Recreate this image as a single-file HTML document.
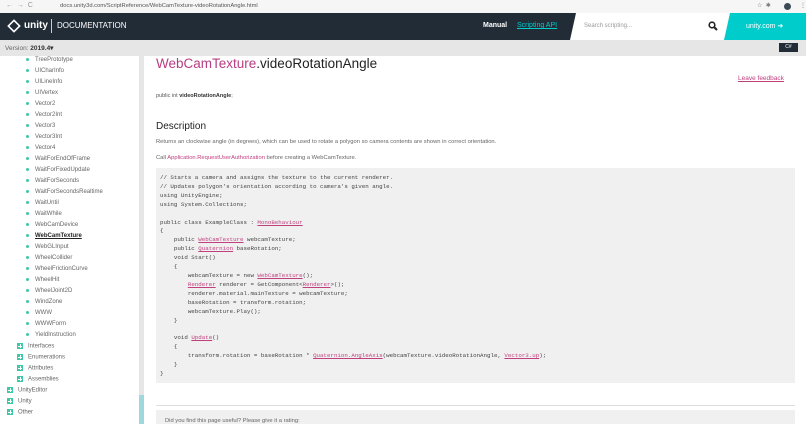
<!DOCTYPE html>
<html><head><style>
*{margin:0;padding:0;box-sizing:border-box}
body{width:806px;height:424px;overflow:hidden;font-family:"Liberation Sans",sans-serif;background:#fff;position:relative;color:#333}
.abs{position:absolute}
.side div{position:absolute;font-size:6px;color:#666;white-space:nowrap}
.dot{display:inline-block;width:3px;height:3px;border-radius:50%;background:#3dc9a8;margin-right:6px;vertical-align:middle}
.plus{display:inline-block;width:6px;height:6px;background:#3dc9a8;margin-right:5px;vertical-align:middle;position:relative}
.plus:after{content:"";position:absolute;left:1px;top:2.5px;width:4px;height:1px;background:#fff}
.plus:before{content:"";position:absolute;left:2.5px;top:1px;width:1px;height:4px;background:#fff}
pre{font-family:"Liberation Mono",monospace;font-size:5.8px;line-height:8.9px;color:#444}
pre u{color:#c0407f}
a{color:#c0407f}
</style></head><body>
<div class="abs" style="left:0;top:0;width:806px;height:13px;background:#f6f6f6"></div>
<div class="abs" style="left:6px;top:2px;font-size:7px;color:#999">←&nbsp;&nbsp;→&nbsp;&nbsp;C</div>
<div class="abs" style="left:60px;top:3px;font-size:5.8px;color:#555">docs.unity3d.com/ScriptReference/WebCamTexture-videoRotationAngle.html</div>
<div class="abs" style="left:757px;top:2px;font-size:6px;color:#777">☆&nbsp;&nbsp;✱</div>
<div class="abs" style="left:784px;top:3px;width:7px;height:7px;border-radius:50%;background:#3c4a55"></div>
<div class="abs" style="left:800px;top:2px;font-size:6px;color:#777">⋮</div>
<div class="abs" style="left:0;top:13px;width:806px;height:27px;background:#222c37"></div>
<div class="abs" style="left:8px;top:20px;width:12px;height:12px;border:2px solid #fff;transform:rotate(45deg) scale(.8)"></div>
<div class="abs" style="left:24px;top:20px;font-size:10px;font-weight:bold;color:#fff">unity</div>
<div class="abs" style="left:51px;top:19px;width:1px;height:14px;background:#ccc"></div>
<div class="abs" style="left:57px;top:21px;font-size:8px;color:#fff">DOCUMENTATION</div>
<div class="abs" style="left:483px;top:22px;font-size:7px;color:#fff;font-weight:bold">Manual</div>
<div class="abs" style="left:517px;top:22px;font-size:7px;color:#00cccc;text-decoration:underline">Scripting API</div>
<div class="abs" style="left:570px;top:13px;width:160px;height:27px;background:#fff;clip-path:polygon(6px 0,100% 0,100% 100%,0 100%)"></div>
<div class="abs" style="left:584px;top:23px;font-size:6px;color:#999">Search scripting...</div>
<svg class="abs" style="left:708px;top:21px" width="10" height="10" viewBox="0 0 10 10"><circle cx="4" cy="4" r="2.8" fill="none" stroke="#222" stroke-width="1.6"/><path d="M6 6 L9 9" stroke="#222" stroke-width="2"/></svg>
<div class="abs" style="left:724px;top:13px;width:82px;height:27px;background:#00cccc;clip-path:polygon(6px 0,100% 0,100% 100%,0 100%)"></div>
<div class="abs" style="left:746px;top:22px;font-size:7px;color:#fff">unity.com ➜</div>
<div class="abs" style="left:0;top:40px;width:806px;height:16px;background:#e6e6e6"></div>
<div class="abs" style="left:5px;top:44px;font-size:6.5px;color:#666">Version: <b style="color:#333">2019.4▾</b></div>
<div class="abs" style="left:779px;top:43px;width:19px;height:9px;background:#222c37;color:#fff;font-size:5px;text-align:center;line-height:9px">C#</div>
<div class="abs" style="left:139px;top:56px;width:5px;height:368px;background:#e6e6e6"></div>
<div class="abs" style="left:139px;top:395px;width:5px;height:29px;background:#9fd8dc"></div>
<div class="side">
<div style="left:26px;top:57px"><span class="dot"></span>TreePrototype</div>
<div style="left:26px;top:68px"><span class="dot"></span>UICharInfo</div>
<div style="left:26px;top:79px"><span class="dot"></span>UILineInfo</div>
<div style="left:26px;top:90px"><span class="dot"></span>UIVertex</div>
<div style="left:26px;top:101px"><span class="dot"></span>Vector2</div>
<div style="left:26px;top:112px"><span class="dot"></span>Vector2Int</div>
<div style="left:26px;top:123px"><span class="dot"></span>Vector3</div>
<div style="left:26px;top:134px"><span class="dot"></span>Vector3Int</div>
<div style="left:26px;top:145px"><span class="dot"></span>Vector4</div>
<div style="left:26px;top:156px"><span class="dot"></span>WaitForEndOfFrame</div>
<div style="left:26px;top:167px"><span class="dot"></span>WaitForFixedUpdate</div>
<div style="left:26px;top:178px"><span class="dot"></span>WaitForSeconds</div>
<div style="left:26px;top:189px"><span class="dot"></span>WaitForSecondsRealtime</div>
<div style="left:26px;top:200px"><span class="dot"></span>WaitUntil</div>
<div style="left:26px;top:211px"><span class="dot"></span>WaitWhile</div>
<div style="left:26px;top:222px"><span class="dot"></span>WebCamDevice</div>
<div style="left:26px;top:233px;color:#222;font-weight:bold;text-decoration:underline"><span class="dot"></span>WebCamTexture</div>
<div style="left:26px;top:244px"><span class="dot"></span>WebGLInput</div>
<div style="left:26px;top:255px"><span class="dot"></span>WheelCollider</div>
<div style="left:26px;top:266px"><span class="dot"></span>WheelFrictionCurve</div>
<div style="left:26px;top:277px"><span class="dot"></span>WheelHit</div>
<div style="left:26px;top:288px"><span class="dot"></span>WheelJoint2D</div>
<div style="left:26px;top:299px"><span class="dot"></span>WindZone</div>
<div style="left:26px;top:310px"><span class="dot"></span>WWW</div>
<div style="left:26px;top:321px"><span class="dot"></span>WWWForm</div>
<div style="left:26px;top:332px"><span class="dot"></span>YieldInstruction</div>
<div style="left:17px;top:343px"><span class="plus"></span>Interfaces</div>
<div style="left:17px;top:354px"><span class="plus"></span>Enumerations</div>
<div style="left:17px;top:365px"><span class="plus"></span>Attributes</div>
<div style="left:17px;top:376px"><span class="plus"></span>Assemblies</div>
<div style="left:7px;top:387px"><span class="plus"></span>UnityEditor</div>
<div style="left:7px;top:398px"><span class="plus"></span>Unity</div>
<div style="left:7px;top:409px"><span class="plus"></span>Other</div>
</div>
<div class="abs" style="left:156px;top:56px;font-size:13.5px;color:#222"><span style="color:#b83c82">WebCamTexture</span>.videoRotationAngle</div>
<div class="abs" style="left:738px;top:75px;font-size:6.5px;color:#c0407f;text-decoration:underline">Leave feedback</div>
<div class="abs" style="left:156px;top:93px;font-size:5.5px;color:#555">public int <b style="color:#333">videoRotationAngle</b>;</div>
<div class="abs" style="left:156px;top:121px;font-size:10px;color:#222">Description</div>
<div class="abs" style="left:156px;top:139px;font-size:5.8px;color:#666">Returns an clockwise angle (in degrees), which can be used to rotate a polygon so camera contents are shown in correct orientation.</div>
<div class="abs" style="left:156px;top:155px;font-size:5.8px;color:#666">Call <a>Application.RequestUserAuthorization</a> before creating a WebCamTexture.</div>
<div class="abs" style="left:156px;top:168px;width:639px;height:215px;background:#f0f0f0"></div>
<pre class="abs" style="left:160px;top:174px">// Starts a camera and assigns the texture to the current renderer.
// Updates polygon's orientation according to camera's given angle.
using UnityEngine;
using System.Collections;

public class ExampleClass : <u>MonoBehaviour</u>
{
    public <u>WebCamTexture</u> webcamTexture;
    public <u>Quaternion</u> baseRotation;
    void Start()
    {
        webcamTexture = new <u>WebCamTexture</u>();
        <u>Renderer</u> renderer = GetComponent&lt;<u>Renderer</u>&gt;();
        renderer.material.mainTexture = webcamTexture;
        baseRotation = transform.rotation;
        webcamTexture.Play();
    }

    void <u>Update</u>()
    {
        transform.rotation = baseRotation * <u>Quaternion.AngleAxis</u>(webcamTexture.videoRotationAngle, <u>Vector3.up</u>);
    }
}</pre>
<div class="abs" style="left:156px;top:405px;width:639px;height:1px;background:#ddd"></div>
<div class="abs" style="left:156px;top:410px;width:639px;height:14px;background:#f0f0f0"></div>
<div class="abs" style="left:165px;top:418px;font-size:5.8px;color:#666">Did you find this page useful? Please give it a rating:</div>
</body></html>
